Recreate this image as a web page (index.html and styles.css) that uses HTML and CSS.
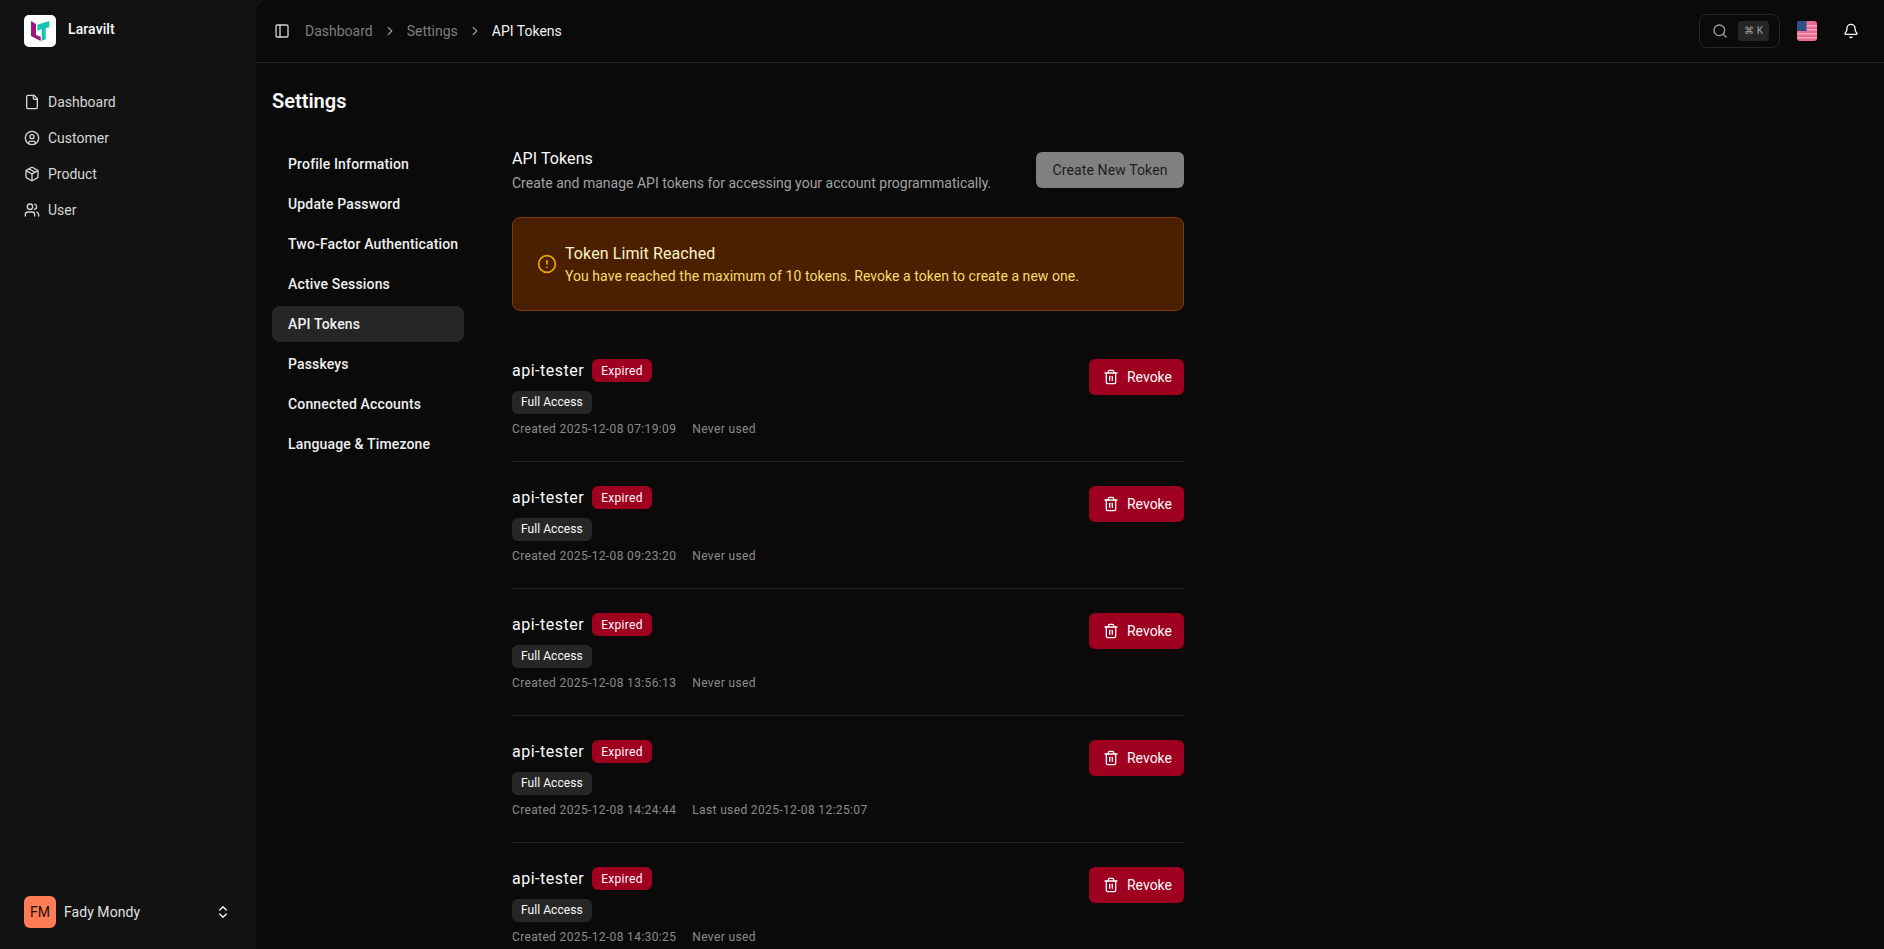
FILE: index.html
```html
<!DOCTYPE html>
<html lang="en">
<head>
    <meta charset="UTF-8">
    <title>API Tokens</title>
    <link rel="stylesheet" href="styles.css">
</head>
<body>
    <aside class="sidebar">
        <div class="brand">
            <div class="brand-logo">
                <svg width="32" height="32" viewBox="0 0 32 32">
                    <path d="M7 6l5 3v11l4.700 1.700V26L7 21z" fill="#a0147e"/>
                    <path d="M13.300 9.700 25.300 6v6.300l-3.600 1v11l-4 1.400V14.300l-4.400 1.400z" fill="#14c4b4"/>
                </svg>
            </div>
            <span class="brand-name">Laravilt</span>
        </div>
        <nav class="side-nav">
            <a class="side-link">
                <svg class="ico" viewBox="0 0 24 24"><path d="M15 2H6a2 2 0 0 0-2 2v16a2 2 0 0 0 2 2h12a2 2 0 0 0 2-2V7z"/><path d="M14 2v4a2 2 0 0 0 2 2h4"/></svg>
                Dashboard
            </a>
            <a class="side-link">
                <svg class="ico" viewBox="0 0 24 24"><circle cx="12" cy="12" r="10"/><circle cx="12" cy="10" r="3"/><path d="M7 20.662V19a2 2 0 0 1 2-2h6a2 2 0 0 1 2 2v1.662"/></svg>
                Customer
            </a>
            <a class="side-link">
                <svg class="ico" viewBox="0 0 24 24"><path d="M11 21.730a2 2 0 0 0 2 0l7-4A2 2 0 0 0 21 16V8a2 2 0 0 0-1-1.730l-7-4a2 2 0 0 0-2 0l-7 4A2 2 0 0 0 3 8v8a2 2 0 0 0 1 1.730z"/><path d="M12 22V12"/><path d="m3.300 7 8.700 5 8.700-5"/><path d="m7.500 4.270 9 5.150"/></svg>
                Product
            </a>
            <a class="side-link">
                <svg class="ico" viewBox="0 0 24 24"><path d="M16 21v-2a4 4 0 0 0-4-4H6a4 4 0 0 0-4 4v2"/><circle cx="9" cy="7" r="4"/><path d="M22 21v-2a4 4 0 0 0-3-3.870"/><path d="M16 3.130a4 4 0 0 1 0 7.750"/></svg>
                User
            </a>
        </nav>
        <div class="side-user">
            <div class="avatar">FM</div>
            <span class="user-name">Fady Mondy</span>
            <svg class="ico chevrons" viewBox="0 0 24 24"><path d="m7 15 5 5 5-5"/><path d="m7 9 5-5 5 5"/></svg>
        </div>
    </aside>

    <main class="main">
        <header class="topbar">
            <div class="crumbs">
                <svg class="ico toggle" viewBox="0 0 24 24"><rect x="3" y="3" width="18" height="18" rx="2"/><path d="M9 3v18"/></svg>
                <a class="crumb">Dashboard</a>
                <svg class="ico sep" viewBox="0 0 24 24"><path d="m9 18 6-6-6-6"/></svg>
                <a class="crumb">Settings</a>
                <svg class="ico sep" viewBox="0 0 24 24"><path d="m9 18 6-6-6-6"/></svg>
                <span class="crumb current">API Tokens</span>
            </div>
            <div class="top-actions">
                <div class="search">
                    <svg class="ico" viewBox="0 0 24 24"><path d="m21 21-4.340-4.340"/><circle cx="11" cy="11" r="8"/></svg>
                    <kbd class="kbd">⌘ K</kbd>
                </div>
                <svg class="flag" width="20" height="20" viewBox="0 0 20 20">
                    <rect width="20" height="20" rx="3" fill="#ee6a92"/>
                    <path d="M0 4h20v1.500H0zM0 8h20v1.500H0zM0 12h20v1.500H0zM0 16h20v1.500H0z" fill="#f6a9bf"/>
                    <path d="M3 0h6.500v10H0V3a3 3 0 0 1 3-3z" fill="#2f4f86"/>
                </svg>
                <svg class="ico bell" viewBox="0 0 24 24"><path d="M10.268 21a2 2 0 0 0 3.464 0"/><path d="M3.262 15.326A1 1 0 0 0 4 17h16a1 1 0 0 0 .740-1.673C19.410 13.956 18 12.499 18 8A6 6 0 0 0 6 8c0 4.499-1.411 5.956-2.738 7.326"/></svg>
            </div>
        </header>

        <section class="page">
            <h1 class="page-title">Settings</h1>
            <div class="settings">
                <nav class="settings-nav">
                    <a class="settings-link">Profile Information</a>
                    <a class="settings-link">Update Password</a>
                    <a class="settings-link">Two-Factor Authentication</a>
                    <a class="settings-link">Active Sessions</a>
                    <a class="settings-link active">API Tokens</a>
                    <a class="settings-link">Passkeys</a>
                    <a class="settings-link">Connected Accounts</a>
                    <a class="settings-link">Language &amp; Timezone</a>
                </nav>
                <div class="panel">
                    <div class="panel-head">
                        <div>
                            <h2 class="panel-title">API Tokens</h2>
                            <p class="panel-sub">Create and manage API tokens for accessing your account programmatically.</p>
                        </div>
                        <button class="btn-create">Create New Token</button>
                    </div>

                    <div class="alert">
                        <svg class="ico alert-icon" viewBox="0 0 24 24"><circle cx="12" cy="12" r="10"/><path d="M12 8v4"/><path d="M12 16h.010"/></svg>
                        <div>
                            <div class="alert-title">Token Limit Reached</div>
                            <div class="alert-text">You have reached the maximum of 10 tokens. Revoke a token to create a new one.</div>
                        </div>
                    </div>

                    <div class="token">
                        <div class="token-info">
                            <div class="token-name">api-tester <span class="badge-expired">Expired</span></div>
                            <div class="badge-scope">Full Access</div>
                            <div class="token-meta"><span>Created 2025-12-08 07:19:09</span><span>Never used</span></div>
                        </div>
                        <button class="btn-revoke"><svg class="ico" viewBox="0 0 24 24"><path d="M3 6h18"/><path d="M19 6v14a2 2 0 0 1-2 2H7a2 2 0 0 1-2-2V6"/><path d="M8 6V4a2 2 0 0 1 2-2h4a2 2 0 0 1 2 2v2"/><path d="M10 11v6"/><path d="M14 11v6"/></svg>Revoke</button>
                    </div>
                    <div class="token">
                        <div class="token-info">
                            <div class="token-name">api-tester <span class="badge-expired">Expired</span></div>
                            <div class="badge-scope">Full Access</div>
                            <div class="token-meta"><span>Created 2025-12-08 09:23:20</span><span>Never used</span></div>
                        </div>
                        <button class="btn-revoke"><svg class="ico" viewBox="0 0 24 24"><path d="M3 6h18"/><path d="M19 6v14a2 2 0 0 1-2 2H7a2 2 0 0 1-2-2V6"/><path d="M8 6V4a2 2 0 0 1 2-2h4a2 2 0 0 1 2 2v2"/><path d="M10 11v6"/><path d="M14 11v6"/></svg>Revoke</button>
                    </div>
                    <div class="token">
                        <div class="token-info">
                            <div class="token-name">api-tester <span class="badge-expired">Expired</span></div>
                            <div class="badge-scope">Full Access</div>
                            <div class="token-meta"><span>Created 2025-12-08 13:56:13</span><span>Never used</span></div>
                        </div>
                        <button class="btn-revoke"><svg class="ico" viewBox="0 0 24 24"><path d="M3 6h18"/><path d="M19 6v14a2 2 0 0 1-2 2H7a2 2 0 0 1-2-2V6"/><path d="M8 6V4a2 2 0 0 1 2-2h4a2 2 0 0 1 2 2v2"/><path d="M10 11v6"/><path d="M14 11v6"/></svg>Revoke</button>
                    </div>
                    <div class="token">
                        <div class="token-info">
                            <div class="token-name">api-tester <span class="badge-expired">Expired</span></div>
                            <div class="badge-scope">Full Access</div>
                            <div class="token-meta"><span>Created 2025-12-08 14:24:44</span><span>Last used 2025-12-08 12:25:07</span></div>
                        </div>
                        <button class="btn-revoke"><svg class="ico" viewBox="0 0 24 24"><path d="M3 6h18"/><path d="M19 6v14a2 2 0 0 1-2 2H7a2 2 0 0 1-2-2V6"/><path d="M8 6V4a2 2 0 0 1 2-2h4a2 2 0 0 1 2 2v2"/><path d="M10 11v6"/><path d="M14 11v6"/></svg>Revoke</button>
                    </div>
                    <div class="token">
                        <div class="token-info">
                            <div class="token-name">api-tester <span class="badge-expired">Expired</span></div>
                            <div class="badge-scope">Full Access</div>
                            <div class="token-meta"><span>Created 2025-12-08 14:30:25</span><span>Never used</span></div>
                        </div>
                        <button class="btn-revoke"><svg class="ico" viewBox="0 0 24 24"><path d="M3 6h18"/><path d="M19 6v14a2 2 0 0 1-2 2H7a2 2 0 0 1-2-2V6"/><path d="M8 6V4a2 2 0 0 1 2-2h4a2 2 0 0 1 2 2v2"/><path d="M10 11v6"/><path d="M14 11v6"/></svg>Revoke</button>
                    </div>
                </div>
            </div>
        </section>
    </main>
</body>
</html>
```

FILE: styles.css
```css
* {
    box-sizing: border-box;
}

body {
    font-family: Roboto, "Liberation Sans", sans-serif;
    display: flex;
    height: 100vh;
    margin: 0;
    overflow: hidden;
    background-color: #121212;
    color: #fafafa;
    font-size: 14px;
}

.ico {
    width: 16px;
    height: 16px;
    flex: none;
    fill: none;
    stroke: currentColor;
    stroke-width: 2;
    stroke-linecap: round;
    stroke-linejoin: round;
}

/* sidebar */
.sidebar {
    width: 256px;
    flex: none;
    display: flex;
    flex-direction: column;
    padding: 15px 24px 21px;
}

.brand {
    display: flex;
    align-items: flex-start;
    gap: 12px;
    height: 32px;
}

.brand-logo {
    width: 32px;
    height: 32px;
    background: #fff;
    border-radius: 5px;
}

.brand-name {
    font-size: 14px;
    font-weight: 500;
    letter-spacing: 0.1px;
    line-height: 28px;
}

.side-nav {
    display: flex;
    flex-direction: column;
    margin-top: 37px;
}

.side-link {
    display: flex;
    align-items: center;
    gap: 8px;
    height: 36px;
    color: #d6d6d6;
}

.side-user {
    display: flex;
    align-items: center;
    margin-top: auto;
    gap: 8px;
}

.avatar {
    width: 32px;
    height: 32px;
    display: flex;
    align-items: center;
    justify-content: center;
    background: #ff7c55;
    color: #1a0f0a;
    border-radius: 6px;
}

.user-name {
    flex: 1;
    font-weight: 450;
    letter-spacing: 0.05px;
    color: #e0e0e0;
}

.chevrons {
    margin-right: 1px;
}

/* main */
.main {
    flex: 1;
    background-color: #0a0a0a;
    border-top-left-radius: 12px;
    overflow: hidden;
}

.topbar {
    display: flex;
    align-items: center;
    justify-content: space-between;
    height: 63px;
    padding: 0 9px 1px 18px;
    border-bottom: 1px solid #222;
}

.crumbs {
    display: flex;
    align-items: center;
    gap: 10px;
}

.toggle {
    margin-right: 5px;
    color: #d0d0d0;
}

.crumb {
    color: #7d7d7d;
}

.crumb.current {
    color: #f0f0f0;
}

.sep {
    width: 14px;
    height: 14px;
    color: #9a9a9a;
}

.top-actions {
    display: flex;
    align-items: center;
    padding-right: 16px;
}

.search {
    display: flex;
    align-items: center;
    justify-content: space-between;
    width: 81px;
    height: 34px;
    padding: 0 10px 0 12px;
    border: 1px solid #262626;
    border-radius: 8px;
    color: #a1a1a1;
}

.kbd {
    font-family: Roboto, sans-serif;
    font-size: 10px;
    color: #a1a1a1;
    background: #262626;
    border-radius: 4px;
    padding: 0 6px;
    height: 20px;
    line-height: 19px;
    white-space: nowrap;
}

.flag {
    margin-left: 17px;
}

.bell {
    margin-left: 26px;
    color: #fafafa;
}

.page {
    padding: 16px;
}

.page-title {
    margin: 0;
    font-size: 20px;
    font-weight: 600;
    line-height: 44px;
}

.settings {
    display: flex;
    gap: 48px;
    margin-top: 4px;
}

.settings-nav {
    width: 192px;
    flex: none;
    display: flex;
    flex-direction: column;
    gap: 4px;
    margin-top: 19px;
}

.settings-link {
    display: flex;
    align-items: center;
    height: 36px;
    padding: 0 16px;
    border-radius: 8px;
    font-weight: 470;
    letter-spacing: 0.16px;
    white-space: nowrap;
    color: #f0f0f0;
}

.settings-link.active {
    background: #262626;
}

.panel {
    width: 672px;
    padding-top: 20px;
}

.panel-head {
    display: flex;
    justify-content: space-between;
    align-items: flex-start;
}

.panel-title {
    margin: 0;
    font-size: 16px;
    font-weight: 450;
    letter-spacing: 0.1px;
    line-height: 24px;
}

.panel-sub {
    margin: 2px 0 0;
    color: #a1a1a1;
    line-height: 20px;
}

.btn-create {
    height: 36px;
    width: 148px;
    margin-top: 5px;
    border: none;
    border-radius: 6px;
    background: #808080;
    color: #1c1c1c;
    font: 450 14px Roboto, sans-serif;
    letter-spacing: 0.12px;
}

.alert {
    display: flex;
    align-items: center;
    gap: 8px;
    height: 94px;
    margin-top: 24px;
    padding: 0 24px;
    background: #4a2000;
    border: 1px solid #7b3a06;
    border-radius: 8px;
}

.alert-icon {
    width: 20px;
    height: 20px;
    color: #eaa800;
}

.alert-title {
    font-size: 16px;
    font-weight: 450;
    letter-spacing: 0.1px;
    line-height: 24px;
    color: #fef3c6;
}

.alert-text {
    line-height: 20px;
    letter-spacing: 0.05px;
    color: #f5dc70;
}

.token {
    display: flex;
    justify-content: space-between;
    align-items: flex-start;
    padding: 24px 0;
    border-bottom: 1px solid #262626;
}

.alert + .token {
    margin-top: 24px;
}

.token-name {
    display: flex;
    align-items: flex-start;
    gap: 8px;
    font-size: 16px;
    font-weight: 450;
    letter-spacing: 0.5px;
    line-height: 24px;
    height: 24px;
}

.badge-expired {
    display: inline-flex;
    align-items: center;
    height: 23px;
    padding: 0 9px;
    background: #a00020;
    border-radius: 6px;
    font-size: 12px;
    font-weight: 450;
    letter-spacing: 0.3px;
}

.badge-scope {
    display: table;
    margin-top: 8px;
    height: 23px;
    padding: 0 9px;
    background: #262626;
    border-radius: 6px;
    font-size: 12px;
    font-weight: 450;
    letter-spacing: 0.05px;
    line-height: 22px;
}

.token-meta {
    display: flex;
    gap: 16px;
    margin-top: 7px;
    font-size: 12px;
    letter-spacing: 0.36px;
    line-height: 16px;
    color: #8a8a8a;
}

.btn-revoke {
    display: flex;
    align-items: center;
    gap: 8px;
    height: 36px;
    padding: 0 12px 0 14px;
    border: none;
    border-radius: 6px;
    background: #a00020;
    color: #fafafa;
    font: 450 14px Roboto, sans-serif;
}
```
